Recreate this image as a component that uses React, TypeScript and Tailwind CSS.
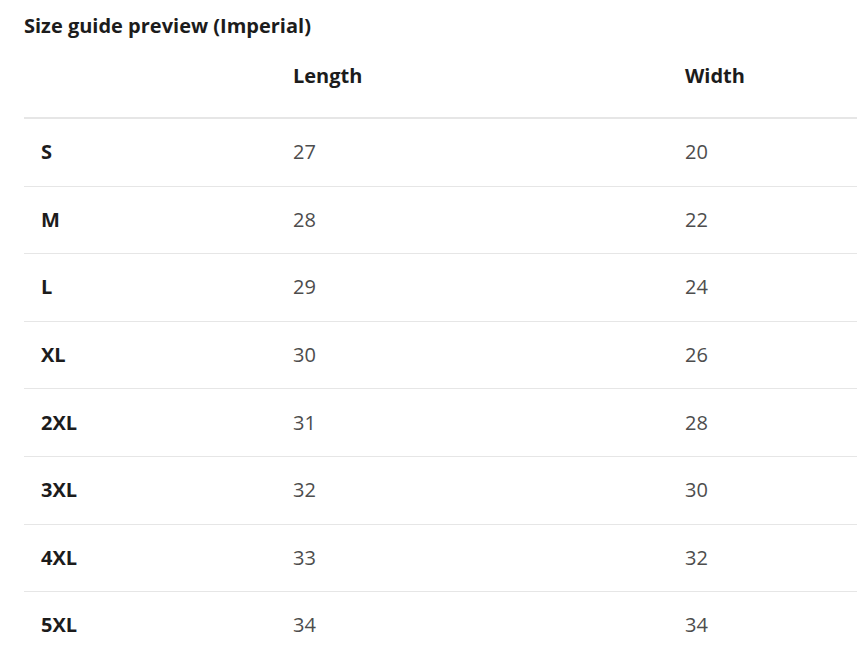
const rows = [
  ["S", "27", "20"],
  ["M", "28", "22"],
  ["L", "29", "24"],
  ["XL", "30", "26"],
  ["2XL", "31", "28"],
  ["3XL", "32", "30"],
  ["4XL", "33", "32"],
  ["5XL", "34", "34"],
];

export default function App() {
  return (
    <div className="min-h-screen bg-white pl-6 font-['Open_Sans','Noto_Sans',sans-serif] text-[#1c1c1c]">
      <h2 className="pt-[14px] text-[20px] leading-[24px] font-bold">Size guide preview (Imperial)</h2>
      <div className="grid grid-cols-[252px_392px_1fr] h-[81px] items-center border-b-2 border-[#e6e6e6] pb-[4px] text-[20px] font-bold">
        <div />
        <div className="pl-[17px]">Length</div>
        <div className="pl-[17px]">Width</div>
      </div>
      {rows.map(([size, len, wid]) => (
        <div
          key={size}
          className="grid grid-cols-[252px_392px_1fr] h-[67.6px] items-center border-b border-[#e6e6e6] text-[20px]"
        >
          <div className="pl-[17px] font-bold">{size}</div>
          <div className="pl-[17px] text-[#4d4d4d]">{len}</div>
          <div className="pl-[17px] text-[#4d4d4d]">{wid}</div>
        </div>
      ))}
    </div>
  );
}
